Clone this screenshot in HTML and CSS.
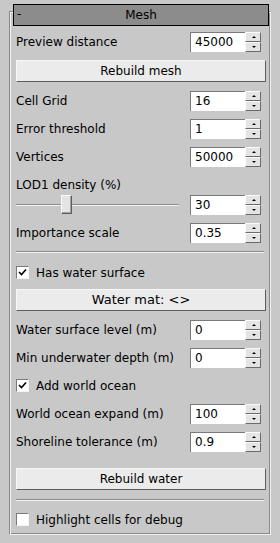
FILE: index.html
```html
<!DOCTYPE html>
<html>
<head>
<meta charset="utf-8">
<link rel="stylesheet" href="styles.css">
</head>
<body>
<div class="panel">
  <div class="header"><span class="minus">-</span><span class="title">Mesh</span></div>
  <div class="body">
    <div class="row m6"><span class="label">Preview distance</span><div class="spinner"><div class="field">45000</div><div class="arrows"><div class="arr up"></div><div class="arr down"></div></div></div></div>
    <div class="btn m8">Rebuild mesh</div>
    <div class="row m9"><span class="label">Cell Grid</span><div class="spinner"><div class="field">16</div><div class="arrows"><div class="arr up"></div><div class="arr down"></div></div></div></div>
    <div class="row m8"><span class="label">Error threshold</span><div class="spinner"><div class="field">1</div><div class="arrows"><div class="arr up"></div><div class="arr down"></div></div></div></div>
    <div class="row m8"><span class="label">Vertices</span><div class="spinner"><div class="field">50000</div><div class="arrows"><div class="arr up"></div><div class="arr down"></div></div></div></div>
    <div class="textrow m10">LOD1 density (%)</div>
    <div class="row m2"><div class="slider"><div class="track"></div><div class="thumb"></div></div><div class="spinner"><div class="field">30</div><div class="arrows"><div class="arr up"></div><div class="arr down"></div></div></div></div>
    <div class="row m8"><span class="label">Importance scale</span><div class="spinner"><div class="field">0.35</div><div class="arrows"><div class="arr up"></div><div class="arr down"></div></div></div></div>
    <div class="sep m8"></div>
    <div class="check m13"><span class="box on"><svg width="9" height="9" viewBox="0 0 9 9"><path d="M1 4 L3.5 6.5 L8 1.5" fill="none" stroke="#000" stroke-width="1.6"/></svg></span><span>Has water surface</span></div>
    <div class="btn big m10">Water mat: &lt;&gt;</div>
    <div class="row m9"><span class="label">Water surface level (m)</span><div class="spinner"><div class="field">0</div><div class="arrows"><div class="arr up"></div><div class="arr down"></div></div></div></div>
    <div class="row m8"><span class="label">Min underwater depth (m)</span><div class="spinner"><div class="field">0</div><div class="arrows"><div class="arr up"></div><div class="arr down"></div></div></div></div>
    <div class="check m11"><span class="box on"><svg width="9" height="9" viewBox="0 0 9 9"><path d="M1 4 L3.5 6.5 L8 1.5" fill="none" stroke="#000" stroke-width="1.6"/></svg></span><span>Add world ocean</span></div>
    <div class="row m12"><span class="label">World ocean expand (m)</span><div class="spinner"><div class="field">100</div><div class="arrows"><div class="arr up"></div><div class="arr down"></div></div></div></div>
    <div class="row m8"><span class="label">Shoreline tolerance (m)</span><div class="spinner"><div class="field">0.9</div><div class="arrows"><div class="arr up"></div><div class="arr down"></div></div></div></div>
    <div class="btn m16">Rebuild water</div>
    <div class="sep m9"></div>
    <div class="check m12"><span class="box"></span><span>Highlight cells for debug</span></div>
  </div>
</div>
</body>
</html>
```
FILE: styles.css
```css
html, body {
  margin: 0;
  padding: 0;
  background: #c8c8c8;
  width: 280px;
  height: 543px;
  overflow: hidden;
  font-family: "DejaVu Sans", Verdana, sans-serif;
  font-size: 12px;
  color: #000;
}
.panel {
  margin: 11px 9px 0 9px;
  height: 522px;
  border: 1px solid #f0f0f0;
  border-top-color: #8a8a8a;
  border-left-color: #8a8a8a;
  box-shadow: inset 1px 1px 0 #f0f0f0, inset -1px -1px 0 #8a8a8a;
  padding: 0 1px;
}
.header {
  margin: -8px 0 0 2px;
  height: 20px;
  background: #8c8c8c;
  border: 1px solid #000;
  position: relative;
  display: flex;
  align-items: center;
  justify-content: center;
}
.minus {
  position: absolute;
  left: 3px;
  top: 2px;
}
.title { line-height: 20px; }
.body {
  display: flex;
  flex-direction: column;
  padding: 0 3px 0 5px;
}
.m2 { margin-top: 2px; }
.m6 { margin-top: 6px; }
.m8 { margin-top: 8px; }
.m9 { margin-top: 9px; }
.m10 { margin-top: 10px; }
.m11 { margin-top: 11px; }
.m12 { margin-top: 12px; }
.m13 { margin-top: 13px; }
.m16 { margin-top: 16px; }
.row {
  height: 20px;
  display: flex;
  align-items: center;
  justify-content: space-between;
  padding-right: 5px;
}
.label { white-space: nowrap; }
.textrow {
  height: 16px;
  line-height: 16px;
}
.spinner {
  display: flex;
  height: 20px;
}
.field {
  width: 50px;
  height: 19px;
  background: #fff;
  border-top: 1px solid #7a7a7a;
  border-left: 1px solid #7a7a7a;
  padding-left: 4px;
  line-height: 19px;
  box-sizing: content-box;
}
.arrows {
  width: 16px;
  display: flex;
  flex-direction: column;
}
.arr {
  height: 8px;
  background: #e4e4e4;
  border: 1px solid;
  border-color: #fafafa #6a6a6a #6a6a6a #fafafa;
  position: relative;
}
.arr::after {
  content: "";
  position: absolute;
  left: 6px;
  top: 3px;
  border-left: 2px solid transparent;
  border-right: 2px solid transparent;
}
.up::after { border-bottom: 2px solid #000; }
.down::after { border-top: 2px solid #000; top: 3px; }
.btn {
  height: 20px;
  line-height: 20px;
  text-align: center;
  background: #ebebeb;
  border: 1px solid;
  border-color: #f8f8f8 #5e5e5e #5e5e5e #f8f8f8;
}
.btn.big { font-size: 13px; }
.sep {
  height: 1px;
  border-bottom: 1px solid #f4f4f4;
  background: #8a8a8a;
  margin-right: 2px;
}
.slider {
  position: relative;
  width: 163px;
  height: 20px;
}
.track {
  position: absolute;
  left: 0;
  right: 0;
  top: 9px;
  height: 1px;
  background: #8a8a8a;
  border-bottom: 1px solid #f4f4f4;
}
.thumb {
  position: absolute;
  left: 45px;
  top: 0;
  width: 9px;
  height: 17px;
  background: #e4e4e4;
  border: 1px solid;
  border-color: #fafafa #5e5e5e #5e5e5e #fafafa;
  box-shadow: inset -1px -1px 0 #a0a0a0;
}
.check {
  height: 13px;
  display: flex;
  align-items: center;
  gap: 7px;
  white-space: nowrap;
}
.box {
  width: 11px;
  height: 11px;
  background: #fff;
  border: 1px solid;
  border-color: #7a7a7a #f4f4f4 #f4f4f4 #7a7a7a;
  display: flex;
  align-items: center;
  justify-content: center;
}
.box svg { display: block; }
```
